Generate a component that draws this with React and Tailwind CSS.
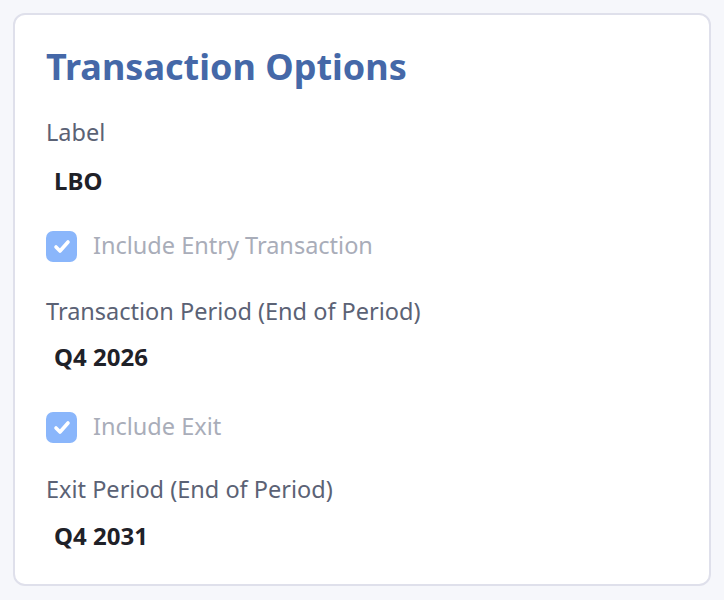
import React from "react";

const font = { fontFamily: "'Noto Sans', Lato, sans-serif" };

function Check() {
  return (
    <span className="flex h-[31px] w-[31px] shrink-0 rounded-[7px] bg-[#8ab6fb]">
      <svg width="31" height="31" viewBox="0 0 31 31" fill="none">
        <path d="M10 16l4 4 8-9" stroke="white" strokeWidth="3.6" strokeLinecap="round" strokeLinejoin="round" />
      </svg>
    </span>
  );
}

function Field({ label, value, labelClass, valueClass }) {
  return (
    <>
      <div className={`flex h-[30px] items-center text-[23.5px] text-[#5b6275] ${labelClass}`}>{label}</div>
      <div className={`flex h-[30px] items-center pl-[8px] text-[24px] font-bold text-[#1f2128] ${valueClass}`}>{value}</div>
    </>
  );
}

function Toggle({ text, className }) {
  return (
    <div className={`flex h-[32px] items-center gap-[16px] ${className}`}>
      <Check />
      <span className="text-[23.5px] text-[#a9adb9]">{text}</span>
    </div>
  );
}

export default function App() {
  return (
    <div className="min-h-[600px] bg-[#f6f7fb] p-[13px]" style={font}>
      <div className="flex h-[573px] flex-col rounded-[12px] border-2 border-[#dfe0eb] bg-white px-[31px] pt-[29px]">
        <h1 className="flex h-[46px] items-center text-[36px] font-bold text-[#4568a8]">Transaction Options</h1>
        <Field label="Label" value="LBO" labelClass="mt-[28px]" valueClass="mt-[18px]" />
        <Toggle text="Include Entry Transaction" className="mt-[34px]" />
        <Field label="Transaction Period (End of Period)" value="Q4 2026" labelClass="mt-[35px]" valueClass="mt-[15px]" />
        <Toggle text="Include Exit" className="mt-[39px]" />
        <Field label="Exit Period (End of Period)" value="Q4 2031" labelClass="mt-[32px]" valueClass="mt-[16px]" />
      </div>
    </div>
  );
}
